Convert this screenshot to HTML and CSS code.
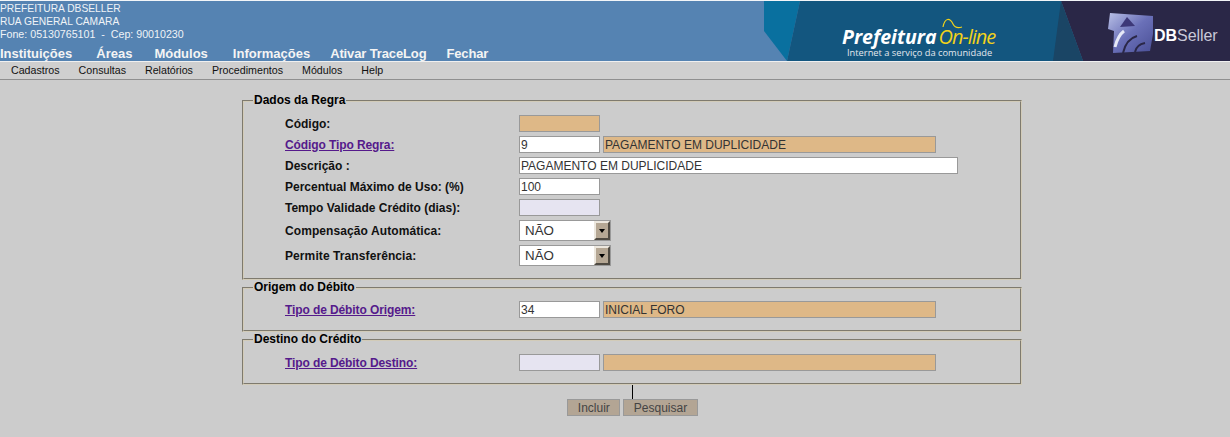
FILE: index.html
```html
<!DOCTYPE html>
<html lang="pt">
<head>
<meta charset="utf-8">
<title>Regra</title>
<link rel="stylesheet" href="styles.css">
</head>
<body>
<header class="topo">
  <div class="topo-info">
    <div class="inst">
      <div>PREFEITURA DBSELLER</div>
      <div>RUA GENERAL CAMARA</div>
      <div class="fone">Fone: 05130765101 &nbsp;-&nbsp; Cep: 90010230</div>
    </div>
    <nav class="nav">
      <a>Instituições</a><a>Áreas</a><a class="mod">Módulos</a><a class="info">Informações</a><a class="perto">Ativar TraceLog</a><a class="perto">Fechar</a>
    </nav>
  </div>
  <svg class="banner" width="466" height="60" viewBox="0 0 466 60" xmlns="http://www.w3.org/2000/svg">
    <defs>
      <linearGradient id="emblema" x1="0" y1="0" x2="1" y2="1">
        <stop offset="0" stop-color="#b9c0e6"/>
        <stop offset="0.5" stop-color="#6a70b8"/>
        <stop offset="1" stop-color="#4a4f96"/>
      </linearGradient>
    </defs>
    <polygon points="0,0 36,0 23,60 0,30" fill="#09709f"/>
    <polygon points="36,0 297,0 319,60 23,60" fill="#13567f"/>
    <polygon points="297,0 466,0 466,60 319,60" fill="#2a2747"/>
    <polygon points="289,60 297,0 319,60" fill="#1a4565"/>
    <text x="78" y="43" class="b-pref">Prefeitura<tspan class="b-on" dx="2">On-line</tspan></text>
    <path d="M179 26 C181 16 186 17 189 23 C191 27 195 27 198 26" fill="none" stroke="#f2d21a" stroke-width="1.2"/>
    <text x="83" y="55" class="b-sub">Internet a serviço da comunidade</text>
    <polygon points="346,12 389,15 389,33 386,50 349,52 350,30 344,28" fill="url(#emblema)"/>
    <polygon points="363,16 371,25 356,26" fill="#3d3878"/>
    <path d="M359 52 C361 43 366 37 373 35" fill="none" stroke="#2a2747" stroke-width="2"/>
    <path d="M371 51 C372 46 376 43 381 42" fill="none" stroke="#2a2747" stroke-width="2"/>
    <path d="M351 46 C353 38 356 33 360 30" fill="none" stroke="#e6e9f7" stroke-width="3"/>
    <text x="390" y="40" class="b-db">DB<tspan class="b-seller">Seller</tspan></text>
  </svg>
</header>
<nav class="menu">
  <a>Cadastros</a><a>Consultas</a><a>Relatórios</a><a>Procedimentos</a><a>Módulos</a><a>Help</a>
</nav>
<main class="conteudo">
  <form class="form">
    <fieldset class="grupo g-dados">
      <legend>Dados da Regra</legend>
      <div class="linha"><label>Código:</label><input class="campo ro" type="text"></div>
      <div class="linha"><label><a class="lnk">Código Tipo Regra:</a></label><input class="campo" type="text" value="9"><input class="campo largo ro" type="text" value="PAGAMENTO EM DUPLICIDADE"></div>
      <div class="linha"><label>Descrição :</label><input class="campo total" type="text" value="PAGAMENTO EM DUPLICIDADE"></div>
      <div class="linha"><label>Percentual Máximo de Uso: (%)</label><input class="campo" type="text" value="100"></div>
      <div class="linha"><label>Tempo Validade Crédito (dias):</label><input class="campo vazio" type="text"></div>
      <div class="linha alta"><label>Compensação Automática:</label><div class="sel"><span class="sel-txt">NÃO</span><span class="sel-btn"></span></div></div>
      <div class="linha alta"><label>Permite Transferência:</label><div class="sel"><span class="sel-txt">NÃO</span><span class="sel-btn"></span></div></div>
    </fieldset>
    <fieldset class="grupo g-origem">
      <legend>Origem do Débito</legend>
      <div class="linha"><label><a class="lnk">Tipo de Débito Origem:</a></label><input class="campo" type="text" value="34"><input class="campo largo ro" type="text" value="INICIAL FORO"></div>
    </fieldset>
    <fieldset class="grupo g-destino">
      <legend>Destino do Crédito</legend>
      <div class="linha"><label><a class="lnk">Tipo de Débito Destino:</a></label><input class="campo vazio" type="text"><input class="campo largo ro" type="text"></div>
    </fieldset>
    <div class="traco"></div>
    <div class="acoes"><button type="button" class="btn">Incluir</button><button type="button" class="btn">Pesquisar</button></div>
  </form>
</main>
</body>
</html>
```
FILE: styles.css
```css
* { box-sizing: border-box; }
html, body { margin: 0; padding: 0; }
body { background: #cccccc; font-family: "Liberation Sans", Arial, sans-serif; font-size: 12px; height: 437px; overflow: hidden; color: #000; }

.topo { height: 62px; background: #5583b2; border-top: 1px solid #f2f5f8; border-bottom: 1px solid #f0f0f0; display: flex; justify-content: space-between; }
.topo-info { display: flex; flex-direction: column; color: #fff; }
.inst { font-size: 10.25px; line-height: 13px; color: #f0f3f7; padding-top: 1px; }
.fone { font-size: 10.67px; }
.nav { margin-top: 5px; font-size: 13px; font-weight: bold; line-height: 15px; display: flex; gap: 24px; color: #f4f4f4; }
.nav .mod { margin-left: -2px; }
.nav .info { margin-left: 1px; }
.nav .perto { margin-left: -4px; letter-spacing: -0.13px; }
.banner { display: block; }
.b-pref { font: italic bold 19.5px "Open Sans", sans-serif; fill: #fff; }
.b-on { font: italic 400 20px "Open Sans", sans-serif; fill: #f2d21a; letter-spacing: -1px; }
.b-sub { font: 9.3px "Open Sans", sans-serif; fill: #e4e8ee; }
.b-db { font: bold 16px "Liberation Sans", sans-serif; fill: #fff; }
.b-seller { font: 16px "Liberation Sans", sans-serif; fill: #c9c9d8; letter-spacing: -0.1px; }

.menu { height: 18px; background: #cfcfcf; border-bottom: 1px solid #8f8f8f; padding-left: 11px; display: flex; gap: 19px; font-size: 10.67px; line-height: 17px; color: #111; }

.conteudo { display: flex; padding: 13px 0 0 242px; }
.form { width: 780px; display: flex; flex-direction: column; }

.grupo { margin: 0; border: 2px groove #d2cbb8; padding: 0; min-width: 0; }
.grupo legend { margin-left: 9px; padding: 0 1px; font-weight: bold; font-size: 12px; line-height: 15px; color: #000; }
.g-dados { height: 187px; padding-top: 5px; }
.g-origem { height: 52px; padding-top: 4px; }
.g-destino { height: 53px; padding-top: 5px; }

.linha { height: 21px; display: flex; align-items: center; padding-left: 41px; color: #111; }
.linha.alta { height: 25px; }
.linha label { width: 234px; flex: none; font-weight: bold; }
.linha.alta label { letter-spacing: 0.09px; }
.lnk { color: #551a8b; text-decoration: underline; letter-spacing: -0.1px; }

.campo { width: 81px; height: 17px; margin: 0 3px 0 0; padding: 0 1px; border: 1px solid #999; background: #fff; color: #333; font: 12px "Liberation Sans", sans-serif; outline: 0; }
.campo.ro { background: #deb887; }
.campo.vazio { background: #e6e4f1; }
.campo.largo { width: 333px; }
.campo.total { width: 439px; }

.sel { width: 92px; height: 21px; border: 1px solid #999; background: #fff; display: flex; align-items: center; justify-content: space-between; }
.sel-txt { padding-left: 5px; font-size: 13.33px; color: #333; }
.sel-btn { width: 16px; height: 19px; background: #b5a794; border: 2px solid; border-color: #ece7de #4f4a42 #4f4a42 #ece7de; display: flex; align-items: center; justify-content: center; }
.sel-btn::after { content: ""; border-top: 4px solid #000; border-left: 3px solid transparent; border-right: 3px solid transparent; }

.traco { width: 1px; height: 14px; background: #000; margin: 0 0 0 390px; }
.acoes { display: flex; justify-content: center; gap: 3px; padding-left: 1px; }
.btn { height: 17px; padding: 0 9.5px; border: 1px solid #999; background: #b3a594; color: #444; font: 12px "Liberation Sans", sans-serif; }
```
